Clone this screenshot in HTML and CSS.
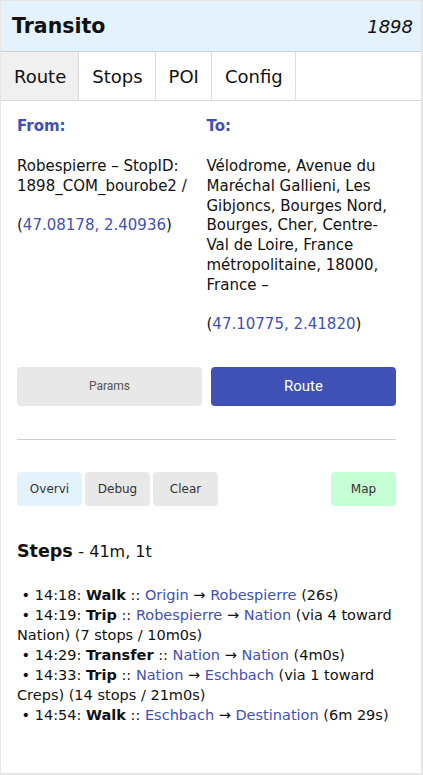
FILE: index.html
```html
<!DOCTYPE html>
<html>
<head>
<meta charset="utf-8">
<link rel="stylesheet" href="styles.css">
</head>
<body>
<div class="app">
  <header class="header">
    <div class="title">Transito</div>
    <div class="agency">1898</div>
  </header>
  <nav class="tabs">
    <div class="tab active">Route</div>
    <div class="tab">Stops</div>
    <div class="tab">POI</div>
    <div class="tab">Config</div>
  </nav>
  <main class="content">
    <div class="places">
      <div class="place">
        <div class="label">From:</div>
        <div>Robespierre – StopID: 1898_COM_bourobe2 /</div>
        <div class="coords">(<span class="link">47.08178, 2.40936</span>)</div>
      </div>
      <div class="place">
        <div class="label">To:</div>
        <div>Vélodrome, Avenue du Maréchal Gallieni, Les Gibjoncs, Bourges Nord, Bourges, Cher, Centre-Val de Loire, France métropolitaine, 18000, France –</div>
        <div class="coords">(<span class="link">47.10775, 2.41820</span>)</div>
      </div>
    </div>
    <div class="actions">
      <button class="btn-params">Params</button>
      <button class="btn-route">Route</button>
    </div>
    <hr class="sep">
    <div class="toolbar">
      <button class="small overview">Overvi</button>
      <button class="small">Debug</button>
      <button class="small">Clear</button>
      <button class="small map">Map</button>
    </div>
    <h2 class="steps-title"><b>Steps</b> <span class="summary">- 41m, 1t</span></h2>
    <div class="steps">
      &nbsp;• 14:18: <b>Walk</b> :: <span class="link">Origin</span> → <span class="link">Robespierre</span> (26s)<br>
      &nbsp;• 14:19: <b>Trip</b> :: <span class="link">Robespierre</span> → <span class="link">Nation</span> (via 4 toward Nation) (7 stops / 10m0s)<br>
      &nbsp;• 14:29: <b>Transfer</b> :: <span class="link">Nation</span> → <span class="link">Nation</span> (4m0s)<br>
      &nbsp;• 14:33: <b>Trip</b> :: <span class="link">Nation</span> → <span class="link">Eschbach</span> (via 1 toward Creps) (14 stops / 21m0s)<br>
      &nbsp;• 14:54: <b>Walk</b> :: <span class="link">Eschbach</span> → <span class="link">Destination</span> (6m 29s)
    </div>
  </main>
</div>
</body>
</html>
```

FILE: styles.css
```css
* { box-sizing: border-box; }
html, body { margin: 0; padding: 0; background: #fff; }
body {
  font-family: "DejaVu Sans", sans-serif;
  color: #111;
}
.app {
  width: 423px;
  height: 775px;
  border: 1px solid #e6e6e6;
  border-right-width: 2px;
  border-bottom-width: 2px;
  display: flex;
  flex-direction: column;
}
.header {
  height: 51px;
  background: #e3f2fd;
  border-bottom: 1px solid #d0d0d0;
  display: flex;
  align-items: center;
  justify-content: space-between;
  padding: 0 8px 0 11px;
}
.title {
  font-weight: bold;
  font-size: 20.5px;
}
.agency {
  font-style: italic;
  font-size: 18px;
}
.tabs {
  display: flex;
  height: 49px;
  border-bottom: 1px solid #d8d8d8;
}
.tab {
  display: flex;
  align-items: center;
  padding: 0 12px 0 13px;
  font-size: 18px;
  border-right: 1px solid #dcdcdc;
}
.tab.active { background: #f0f0f0; }
.content {
  padding: 16px 25px 0 16px;
}
.places {
  display: grid;
  grid-template-columns: 1fr 1fr;
  font-size: 15px;
  line-height: 19.8px;
}
.label {
  color: #3f51b5;
  font-weight: bold;
  height: 40px;
}
.coords { margin-top: 19.5px; }
.link { color: #3f51b5; }
.actions {
  display: grid;
  grid-template-columns: 1fr 1fr;
  gap: 9px;
  margin-top: 32px;
}
.actions button {
  height: 39px;
  border: none;
  border-radius: 4px;
  font-family: Roboto, "Liberation Sans", sans-serif;
}
.btn-params {
  background: #e8e8e8;
  color: #555;
  font-size: 12px;
}
.btn-route {
  background: #3f51b5;
  color: #fff;
  font-size: 15px;
}
.sep {
  border: none;
  border-top: 1px solid #cfcfcf;
  margin: 33px 0 0 0;
}
.toolbar {
  display: flex;
  gap: 3px;
  margin-top: 32px;
}
.small {
  width: 65px;
  height: 34px;
  border: none;
  border-radius: 4px;
  background: #e8e8e8;
  color: #333;
  font-family: "DejaVu Sans", sans-serif;
  font-size: 12px;
}
.small.overview { background: #e3f2fd; }
.small.map { background: #c6fed6; margin-left: auto; }
.steps-title {
  margin: 33px 0 0 0;
  font-size: 17.5px;
  font-weight: normal;
  line-height: 24px;
}
.summary { font-size: 16px; }
.steps {
  margin-top: 21px;
  font-size: 14.5px;
  line-height: 20px;
}
```
